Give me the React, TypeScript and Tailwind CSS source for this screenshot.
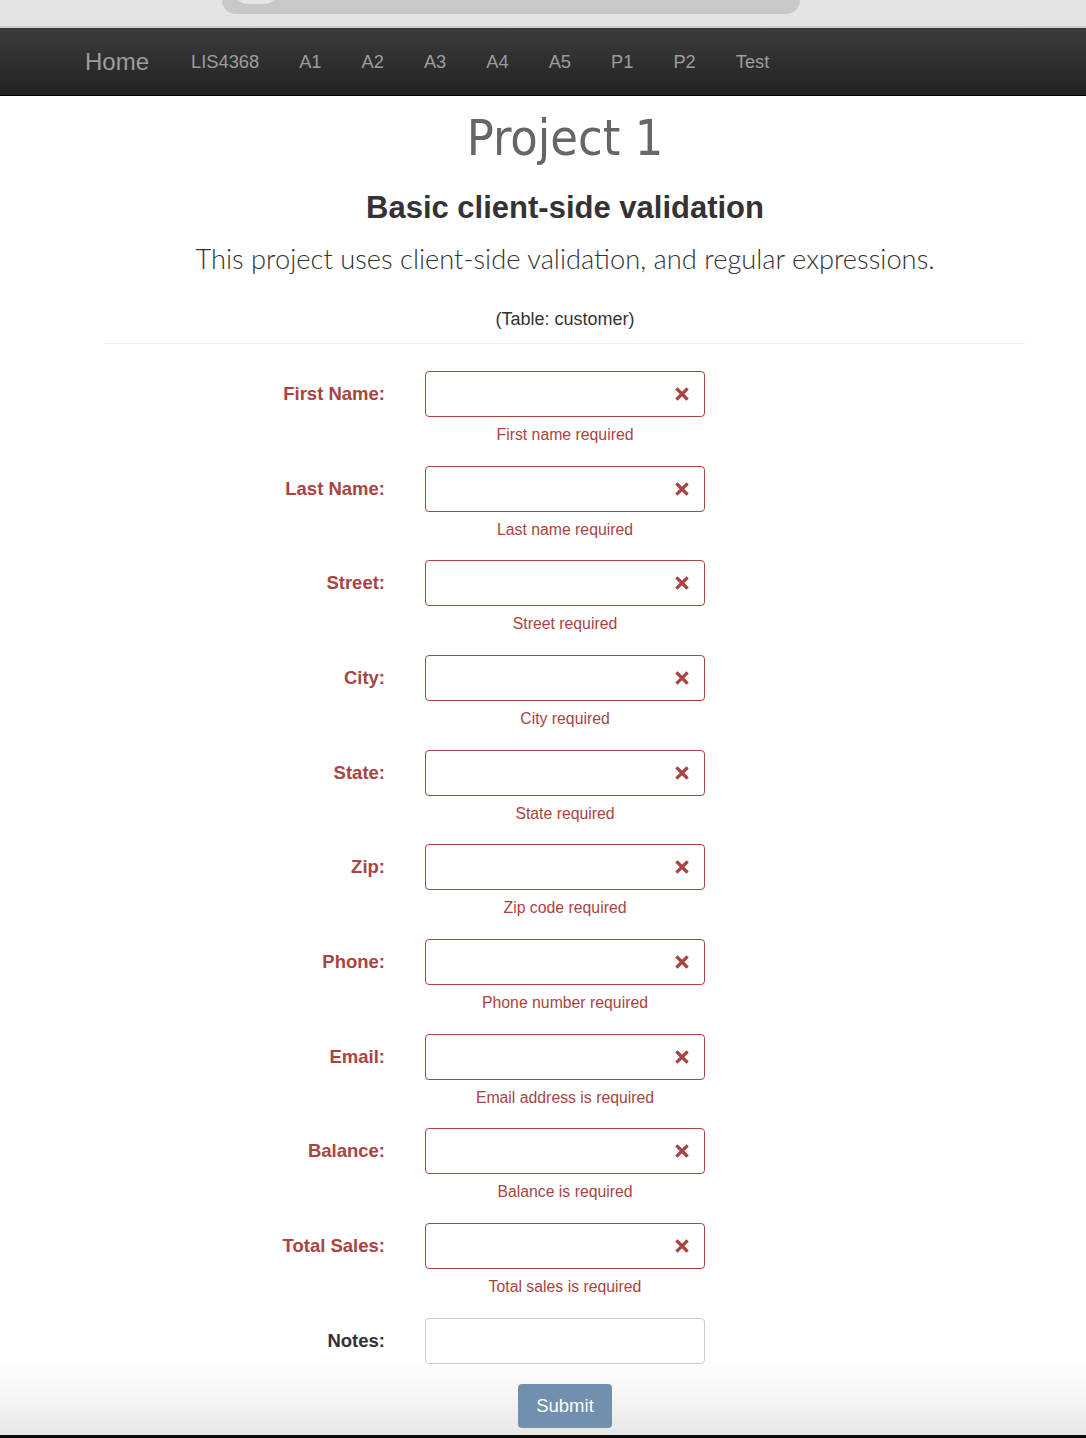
const navLinks = ['LIS4368', 'A1', 'A2', 'A3', 'A4', 'A5', 'P1', 'P2', 'Test']

const fields = [
  { label: 'First Name:', error: 'First name required' },
  { label: 'Last Name:', error: 'Last name required' },
  { label: 'Street:', error: 'Street required' },
  { label: 'City:', error: 'City required' },
  { label: 'State:', error: 'State required' },
  { label: 'Zip:', error: 'Zip code required' },
  { label: 'Phone:', error: 'Phone number required' },
  { label: 'Email:', error: 'Email address is required' },
  { label: 'Balance:', error: 'Balance is required' },
  { label: 'Total Sales:', error: 'Total sales is required' },
]

function RemoveIcon() {
  return (
    <svg width="14" height="14" viewBox="0 0 14 14" className="text-[#a94442]">
      <path d="M2.5 2.5 L11.5 11.5 M11.5 2.5 L2.5 11.5" stroke="currentColor" strokeWidth="3.2" strokeLinecap="square" />
    </svg>
  )
}

export default function App() {
  return (
    <div className="h-[1438px] overflow-hidden font-['Liberation_Sans',Arial,sans-serif] bg-[linear-gradient(to_bottom,#ffffff_1360px,#f4f4f4_1400px,#e6e6e6_1435px,#0b0b0b_1435px)]">
      {/* browser chrome strip */}
      <div className="h-[28px] bg-[#e4e4e4] border-b-2 border-[#cfcfcf]">
        <div className="ml-[222px] w-[578px] h-[14px] bg-[#c8c8c8] rounded-b-[22px] overflow-hidden relative">
          <div className="absolute left-[12px] -top-[24px] w-[44px] h-[28px] rounded-full bg-[#e4e4e4]" />
        </div>
      </div>

      <nav className="h-[68px] bg-[linear-gradient(to_bottom,#3c3c3c,#222222)] border-b border-black flex items-center pl-[85px] gap-10 text-[#9d9d9d]">
        <span className="text-[24px] mr-[2px]">Home</span>
        {navLinks.map(link => (
          <span key={link} className="text-[18.3px]">{link}</span>
        ))}
      </nav>

      <div className="ml-[105px] w-[920px]">
        <div className="text-center">
          <h1 className="mt-[14px] text-[50px] leading-[56px] text-[#666] font-['DejaVu_Sans_Condensed','DejaVu_Sans',sans-serif] [font-stretch:condensed]">
            Project 1
          </h1>
          <h2 className="mt-[22px] text-[31px] leading-[40px] font-bold text-[#333]">Basic client-side validation</h2>
          <p className="mt-[11px] text-[27.3px] leading-[40px] font-light text-[#333] font-['Lato',sans-serif]">
            This project uses client-side validation, and regular expressions.
          </p>
          <p className="mt-[28px] text-[18px] leading-[24px] text-[#333]">(Table: customer)</p>
        </div>
        <hr className="mt-[12px] border-0 border-t border-[#eee]" />

        <form className="mt-[27px]" onSubmit={e => e.preventDefault()}>
          {fields.map(field => (
            <div key={field.label} className="h-[94.67px] flex">
              <label className="w-[280px] h-[46px] flex items-center justify-end text-[18.5px] font-bold text-[#a94442]">
                {field.label}
              </label>
              <div className="ml-10 w-[280px]">
                <div className="h-[46px] rounded-[4px] border border-[#a94442] flex items-center justify-end pr-[15px] bg-white">
                  <RemoveIcon />
                </div>
                <p className="mt-[8px] text-[15.8px] leading-[20px] text-center text-[#a94442]">{field.error}</p>
              </div>
            </div>
          ))}
          <div className="flex">
            <label className="w-[280px] h-[46px] flex items-center justify-end text-[18.5px] font-bold text-[#333]">Notes:</label>
            <div className="ml-10 w-[280px] h-[46px] rounded-[4px] border border-[#ccc] bg-white" />
          </div>
          <div className="mt-[20px] flex justify-center">
            <button type="submit" className="w-[94px] h-[44px] rounded-[4px] bg-[#7190ae] text-white text-[18.5px]">
              Submit
            </button>
          </div>
        </form>
      </div>
    </div>
  )
}
